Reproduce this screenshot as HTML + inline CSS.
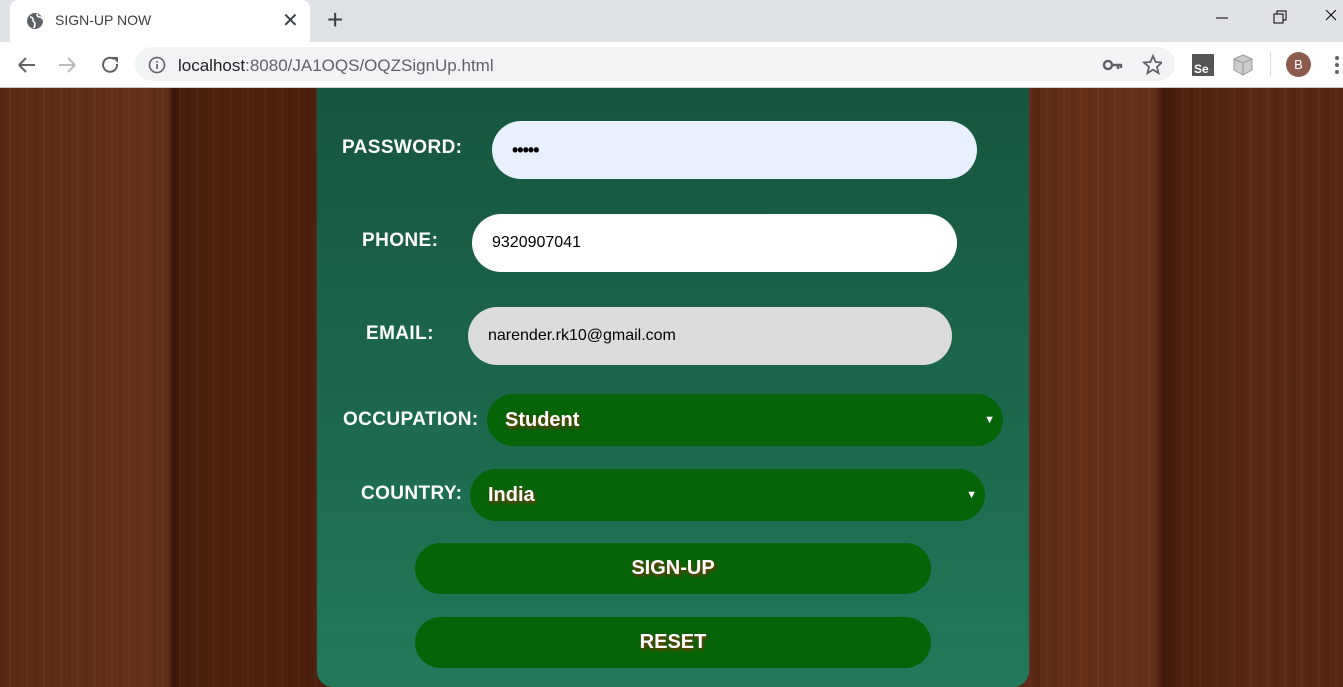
<!DOCTYPE html>
<html style="width:1343px;height:687px;overflow:hidden"><head><meta charset="utf-8"><style>
*{margin:0;padding:0;box-sizing:border-box}
body{width:1343px;height:687px;overflow:hidden;font-family:"Liberation Sans",Arial,sans-serif;position:relative;background:#fff}
.tabbar{position:absolute;left:0;top:0;width:1343px;height:42px;background:#dee1e6}
.tab{position:absolute;left:10px;top:0;width:300px;height:42px;background:#fff;border-radius:8px 8px 0 0}
.tab .t{position:absolute;left:45px;top:12px;font-size:14px;color:#3c4043}
.tab .x{position:absolute;left:272px;top:8px;font-size:20px;color:#3c4043}
.plus{position:absolute;left:327px;top:4px;font-size:28px;color:#3c4043;font-weight:300}
.toolbar{position:absolute;left:0;top:42px;width:1343px;height:46px;background:#fff;border-bottom:1px solid #ccc}
.omni{position:absolute;left:135px;top:5px;width:1040px;height:34px;background:#f1f3f4;border-radius:17px}
.url{position:absolute;left:178px;top:14px;font-size:17px;color:#5f6368}
.url b{font-weight:normal;color:#202124}
.wood{position:absolute;left:0;top:88px;width:1343px;height:599px;background:linear-gradient(90deg,#5a2a16 0,#5f2e18 80px,#643019 140px,#5e2f18 168px,#3a1608 174px,#48200f 184px,#50230f 250px,#4b200f 310px,#5a2a16 1030px,#652f18 1080px,#62301a 1155px,#3a1507 1165px,#4d2210 1178px,#582915 1250px,#562714 1343px)}
.wood:after{content:"";position:absolute;inset:0;background:repeating-linear-gradient(90deg,rgba(0,0,0,.06) 0 3px,transparent 3px 9px,rgba(255,255,255,.03) 9px 11px,transparent 11px 17px)}
.panel{position:absolute;left:317px;top:88px;width:712px;height:599px;border-radius:0 0 16px 16px;background:linear-gradient(180deg,#17553e,#22795a);z-index:2;overflow:hidden}
.lbl{position:absolute;color:#fff;font-weight:bold;font-size:19px;letter-spacing:0.4px}
.inp{position:absolute;height:58px;border-radius:29px;font-size:16px;color:#000;padding-left:20px;line-height:58px}
.sel{position:absolute;height:52px;border-radius:26px;background:#056407;color:#fff;font-weight:bold;font-size:20px;line-height:52px;padding-left:18px;text-shadow:1px 2px 3px #8a3000}
.sel i{position:absolute;right:8px;top:0;font-style:normal;font-size:11px;text-shadow:none}
.btn{position:absolute;left:98px;width:516px;height:51px;border-radius:26px;background:#056407;color:#fff;font-weight:bold;font-size:20px;line-height:51px;text-align:center;text-shadow:1px 2px 3px #8a3000}
</style></head><body>
<div class="tabbar">
<div class="tab">
<svg style="position:absolute;left:16px;top:12px" width="18" height="18" viewBox="0 0 18 18"><circle cx="9" cy="9" r="8" fill="#5f6368"/><path d="M4 5c2 0 3 1 3 3s2 2 2 4-1 3-1 4M11 2c0 2 1 3 3 3s2 2 3 2" stroke="#fff" stroke-width="1.6" fill="none"/></svg>
<span class="t">SIGN-UP NOW</span><span class="x">✕</span></div>
<span class="plus">+</span>
<svg style="position:absolute;left:1216px;top:10px" width="120" height="20"><line x1="0" y1="8" x2="12" y2="8" stroke="#000"/><rect x="58" y="4" width="9" height="9" fill="none" stroke="#000"/><path d="M61 4V1h9v9h-3" fill="none" stroke="#000"/><path d="M110 0l10 10M120 0l-10 10" stroke="#000"/></svg>
</div>
<div class="toolbar">
<svg style="position:absolute;left:16px;top:13px" width="110" height="20"><path d="M3 10h16M3 10l7-7M3 10l7 7" stroke="#5f6368" stroke-width="2" fill="none"/><path d="M43 10h16M59 10l-7-7M59 10l-7 7" stroke="#bbb" stroke-width="2" fill="none"/><path d="M98 4a7 7 0 1 0 3 5" stroke="#5f6368" stroke-width="2" fill="none"/><path d="M96 2h6v6z" fill="#5f6368"/></svg>
<div class="omni"></div>
<svg style="position:absolute;left:148px;top:14px" width="18" height="18"><circle cx="9" cy="9" r="7.5" fill="none" stroke="#5f6368" stroke-width="1.6"/><rect x="8.2" y="8" width="1.7" height="5" fill="#5f6368"/><rect x="8.2" y="5" width="1.7" height="1.7" fill="#5f6368"/></svg>
<div class="url"><b>localhost</b>:8080/JA1OQS/OQZSignUp.html</div>
<svg style="position:absolute;left:1102px;top:12px" width="60" height="22"><circle cx="6" cy="11" r="4" fill="none" stroke="#5f6368" stroke-width="2.5"/><path d="M10 11h10M16 11v4M19 11v3" stroke="#5f6368" stroke-width="2.5"/><path d="M51 2l2.6 6 6.4.5-5 4.3 1.5 6.3-5.5-3.4-5.5 3.4 1.5-6.3-5-4.3 6.4-.5z" fill="none" stroke="#5f6368" stroke-width="1.8"/></svg>
<div style="position:absolute;left:1192px;top:12px;width:22px;height:22px;background:#555;color:#fff;font-size:12px;font-weight:bold;padding:8px 0 0 2px">Se</div>
<svg style="position:absolute;left:1231px;top:11px" width="24" height="24"><path d="M12 2l9 4v11l-9 5-9-5V6z" fill="#ccc" stroke="#999"/><path d="M3 6l9 4 9-4M12 10v12" stroke="#999" fill="none"/></svg>
<div style="position:absolute;left:1270px;top:10px;width:1px;height:24px;background:#ddd"></div>
<div style="position:absolute;left:1286px;top:10px;width:25px;height:25px;border-radius:50%;background:#8d5b4c;color:#fff;font-size:13px;text-align:center;line-height:25px">B</div>
<svg style="position:absolute;left:1334px;top:13px" width="6" height="20"><circle cx="3" cy="3" r="2" fill="#5f6368"/><circle cx="3" cy="10" r="2" fill="#5f6368"/><circle cx="3" cy="17" r="2" fill="#5f6368"/></svg>
</div>
<div class="wood"></div>
<div class="panel">
<div class="lbl" style="left:25px;top:49px">PASSWORD:</div>
<div class="inp" style="left:175px;top:33px;width:485px;background:#e8f0fe;font-size:18px;font-weight:bold;letter-spacing:-1px">•••••</div>
<div class="lbl" style="left:45px;top:142px">PHONE:</div>
<div class="inp" style="left:155px;top:126px;width:485px;background:#fff">9320907041</div>
<div class="lbl" style="left:49px;top:235px">EMAIL:</div>
<div class="inp" style="left:151px;top:219px;width:484px;background:#dcdcdc">narender.rk10@gmail.com</div>
<div class="lbl" style="left:26px;top:321px">OCCUPATION:</div>
<div class="sel" style="left:170px;top:306px;width:516px">Student<i>▼</i></div>
<div class="lbl" style="left:44px;top:395px">COUNTRY:</div>
<div class="sel" style="left:153px;top:381px;width:515px">India<i>▼</i></div>
<div class="btn" style="top:455px">SIGN-UP</div>
<div class="btn" style="top:529px">RESET</div>
</div>
</body></html>
